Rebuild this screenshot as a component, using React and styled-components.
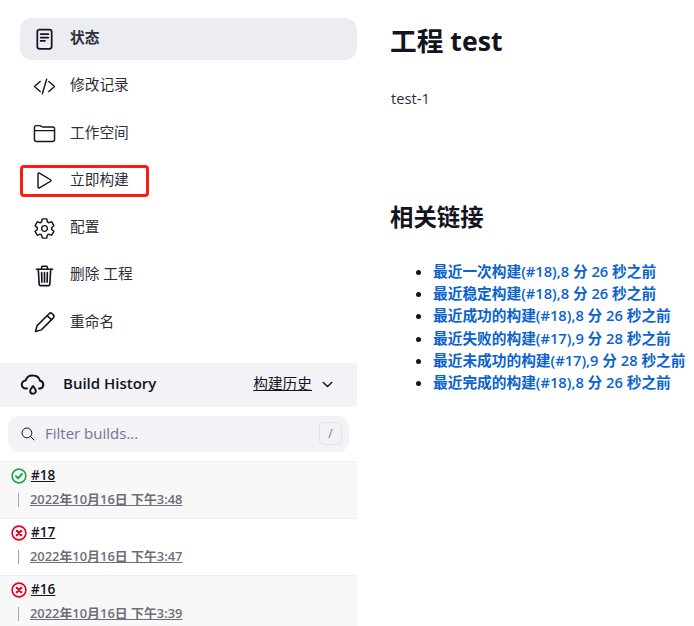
import React from "react";
import styled, { createGlobalStyle } from "styled-components";
import {
  IoCodeSlashOutline,
  IoFolderOutline,
  IoPlayOutline,
  IoSettingsOutline,
  IoSearchOutline,
  IoChevronDownOutline,
} from "react-icons/io5";

const Global = createGlobalStyle`
  html, body { margin: 0; padding: 0; background: #fff; }
  body {
    width: 694px;
    height: 626px;
    overflow: hidden;
    font-family: "Open Sans", "Noto Sans CJK SC", sans-serif;
    color: #14141f;
    font-size: 14.7px;
    line-height: 20px;
  }
`;

const Page = styled.div`
  display: grid;
  grid-template-columns: 357px 1fr;
  height: 626px;
  overflow: hidden;
`;
const Side = styled.aside`
  display: flex;
  flex-direction: column;
  padding-top: 18px;
`;
const Nav = styled.nav`
  display: flex;
  flex-direction: column;
  gap: 5.3px;
  padding-left: 20px;
  margin-bottom: 19px;
`;
const NavItem = styled.a`
  display: flex;
  align-items: center;
  gap: 14px;
  height: 42px;
  box-sizing: border-box;
  padding-left: 13px;
  border-radius: 12px;
  color: #2e2e3a;
  background: ${(p) => (p.$active ? "#ecedf3" : "transparent")};
  font-weight: ${(p) => (p.$active ? 700 : 400)};
  svg { width: 23px; height: 23px; color: #14141f; flex: none; }
`;
const Marked = styled(NavItem)`
  width: 129px;
  height: 32px;
  margin: 5px 0;
  border: 3px solid #fb1d12;
  border-radius: 4px;
  svg { margin-left: -3px; }
`;
const NavLabel = styled.span`
  padding-bottom: 4px;
`;
const HistoryHead = styled.div`
  display: flex;
  align-items: center;
  height: 44px;
  padding: 0 22px 0 20px;
  background: #f2f2f7;
  font-weight: 600;
  svg { color: #14141f; flex: none; }
`;
const HistoryTitle = styled.span`
  margin-left: 17px;
  flex: 1;
  font-size: 15px;
  padding-bottom: 4px;
`;
const HistoryLink = styled.span`
  font-weight: 400;
  text-decoration: underline;
  margin-right: 8px;
  padding-bottom: 4px;
`;
const Search = styled.div`
  display: flex;
  align-items: center;
  height: 36px;
  margin: 9px 8px;
  padding: 0 7px 0 12px;
  border-radius: 11px;
  background: #f2f2f7;
  color: #75758f;
  svg { color: #14141f; width: 16px; height: 16px; }
`;
const Placeholder = styled.span`
  flex: 1;
  margin-left: 9px;
  font-size: 15px;
  padding-bottom: 2px;
`;
const Key = styled.span`
  width: 23px;
  height: 23px;
  display: grid;
  place-items: center;
  border: 1px solid #e2e2ea;
  border-radius: 5px;
  box-sizing: border-box;
  font-size: 12px;
`;
const Build = styled.div`
  height: 57px;
  box-sizing: border-box;
  padding: 3px 0 0 11px;
  border-top: 1px solid #efeff2;
  background: ${(p) => (p.$odd ? "#f8f8f8" : "#fff")};
`;
const BuildLine = styled.div`
  display: flex;
  align-items: center;
  gap: 4px;
  height: 22px;
  font-size: 13.6px;
  font-weight: 600;
  a { color: #14141f; text-decoration: underline; padding-bottom: 2px; }
`;
const TimeLine = styled.div`
  display: flex;
  align-items: center;
  margin-top: 2px;
  height: 20px;
  font-size: 12.9px;
  font-weight: 600;
  color: #6e6e78;
  text-decoration: underline;
`;
const Rail = styled.i`
  width: 1px;
  height: 14px;
  background: #9aa8b0;
  margin: 2px 11px 0 7px;
`;
const Main = styled.main`
  padding: 21px 0 0 34px;
  white-space: nowrap;
`;
const Title = styled.h1`
  margin: 0 0 0 -1px;
  font-size: 26.7px;
  line-height: 40px;
  font-weight: 700;
`;
const Desc = styled.p`
  margin: 27px 0 0;
  line-height: 20px;
  color: #2e2e3a;
`;
const SubTitle = styled.h2`
  margin: 93px 0 0 -1px;
  font-size: 23.4px;
  line-height: 32px;
  font-weight: 700;
`;
const Links = styled.ul`
  margin: 27px 0 0;
  padding-left: 42px;
  line-height: 22.2px;
  a { color: #0b63ce; font-weight: 600; }
`;

function DocIcon() {
  return (
    <svg viewBox="0 0 24 24" fill="none" stroke="currentColor" strokeWidth="1.8" strokeLinecap="round" strokeLinejoin="round">
      <rect x="4.5" y="1.8" width="15" height="20" rx="2.4" />
      <path d="M8 6.5h8M8 10h8M8 13.5h4.5" />
    </svg>
  );
}

function TrashIcon() {
  return (
    <svg viewBox="0 0 24 24" fill="none" stroke="currentColor" strokeWidth="1.7" strokeLinecap="round" strokeLinejoin="round">
      <path d="M3.5 5.5h17M9 5.2V3.4c0-.6.4-1 1-1h4c.6 0 1 .4 1 1v1.8" />
      <path d="M5.5 5.5l1 16c0 .6.5 1 1 1h9c.5 0 1-.4 1-1l1-16" />
      <path d="M9 9l.3 10M12 9v10M15 9l-.3 10" />
    </svg>
  );
}

function PencilIcon() {
  return (
    <svg viewBox="0 0 24 24" fill="none" stroke="currentColor" strokeWidth="1.6" strokeLinecap="round" strokeLinejoin="round">
      <path d="M2.5 21.5l1.8-6.2L16.8 2.8c.9-.9 2.3-.9 3.2 0l1.2 1.2c.9.9.9 2.3 0 3.2L8.7 19.7z" />
      <path d="M14.8 4.8l4.4 4.4" />
    </svg>
  );
}

const navItems = [
  { label: "状态", Icon: DocIcon, active: true },
  { label: "修改记录", Icon: IoCodeSlashOutline },
  { label: "工作空间", Icon: IoFolderOutline },
  { label: "立即构建", Icon: IoPlayOutline, marked: true },
  { label: "配置", Icon: IoSettingsOutline },
  { label: "删除 工程", Icon: TrashIcon },
  { label: "重命名", Icon: PencilIcon },
];

const builds = [
  { id: "#18", time: "2022年10月16日 下午3:48", ok: true },
  { id: "#17", time: "2022年10月16日 下午3:47" },
  { id: "#16", time: "2022年10月16日 下午3:39" },
];

const links = [
  "最近一次构建(#18),8 分 26 秒之前",
  "最近稳定构建(#18),8 分 26 秒之前",
  "最近成功的构建(#18),8 分 26 秒之前",
  "最近失败的构建(#17),9 分 28 秒之前",
  "最近未成功的构建(#17),9 分 28 秒之前",
  "最近完成的构建(#18),8 分 26 秒之前",
];

function StatusIcon({ ok }) {
  const color = ok ? "#1ea64b" : "#e6001f";
  return (
    <svg width="16" height="16" viewBox="0 0 16 16" fill="none" stroke={color}>
      <circle cx="8" cy="8" r="6.9" strokeWidth="1.6" />
      {ok ? (
        <path d="M5 8.3l2.1 2L11 6" strokeWidth="2" strokeLinecap="round" strokeLinejoin="round" />
      ) : (
        <path d="M5.8 5.8l4.4 4.4M10.2 5.8l-4.4 4.4" strokeWidth="2.2" strokeLinecap="round" />
      )}
    </svg>
  );
}

function CloudIcon() {
  return (
    <svg width="26" height="24" viewBox="0 0 26 24" fill="none" stroke="currentColor" strokeWidth="2" strokeLinecap="round" strokeLinejoin="round">
      <path d="M7 15.5H6a4 4 0 0 1-.4-8A7.2 7.2 0 0 1 13 2.5c3.4 0 6.2 2.2 7 5.3a3.9 3.9 0 0 1 0 7.7h-1" />
      <path d="M13 13c1.5 1.9 2.8 3.2 2.8 4.9a2.8 2.8 0 0 1-5.6 0c0-1.7 1.3-3 2.8-4.9z" />
    </svg>
  );
}

export default function App() {
  return (
    <Page>
      <Global />
      <Side>
        <Nav>
          {navItems.map(({ label, Icon, active, marked }) => {
            const Row = marked ? Marked : NavItem;
            return (
              <Row key={label} $active={active}>
                <Icon />
                <NavLabel>{label}</NavLabel>
              </Row>
            );
          })}
        </Nav>
        <HistoryHead>
          <CloudIcon />
          <HistoryTitle>Build History</HistoryTitle>
          <HistoryLink>构建历史</HistoryLink>
          <IoChevronDownOutline size={15} />
        </HistoryHead>
        <Search>
          <IoSearchOutline />
          <Placeholder>Filter builds...</Placeholder>
          <Key>/</Key>
        </Search>
        {builds.map((b, i) => (
          <Build key={b.id} $odd={i % 2 === 0}>
            <BuildLine>
              <StatusIcon ok={b.ok} />
              <a>{b.id}</a>
            </BuildLine>
            <TimeLine>
              <Rail />
              {b.time}
            </TimeLine>
          </Build>
        ))}
      </Side>
      <Main>
        <Title>工程 test</Title>
        <Desc>test-1</Desc>
        <SubTitle>相关链接</SubTitle>
        <Links>
          {links.map((l) => (
            <li key={l}>
              <a>{l}</a>
            </li>
          ))}
        </Links>
      </Main>
    </Page>
  );
}
